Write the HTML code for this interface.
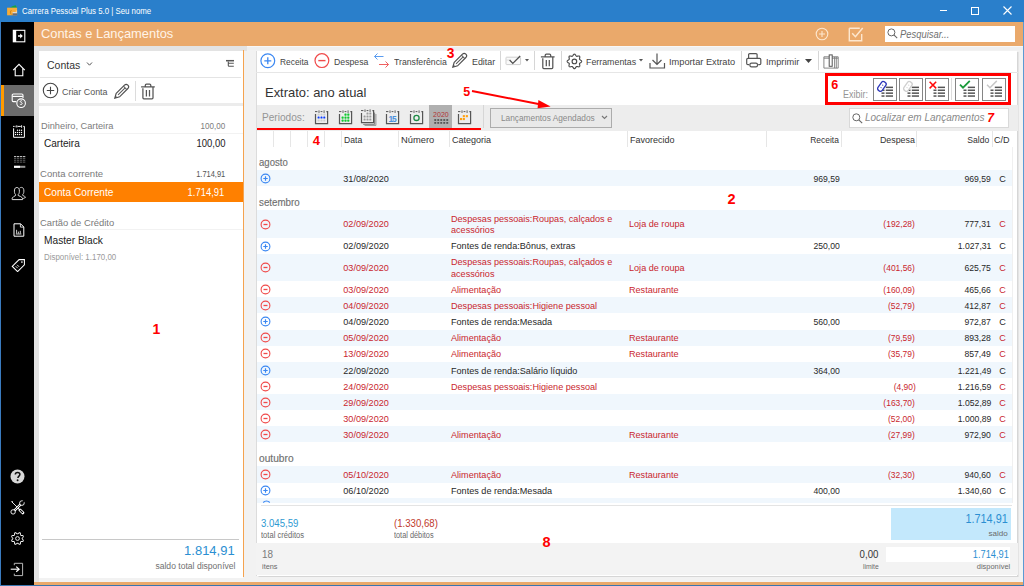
<!DOCTYPE html>
<html><head><meta charset="utf-8"><title>Carrera Pessoal Plus</title>
<style>
html,body{margin:0;padding:0;}
body{width:1024px;height:586px;overflow:hidden;position:relative;background:#f0f0f0;font-family:"Liberation Sans",sans-serif;}
body>div,body>svg{position:absolute;}
.t{white-space:nowrap;}
</style></head><body>
<div style="left:0px;top:0px;width:1024px;height:586px;background:#f2f2f2;"></div>
<div style="left:0px;top:0px;width:1024px;height:22px;background:#2a7fcb;"></div>
<div style="left:0px;top:22px;width:1px;height:564px;background:#3a7bbf;"></div>
<div style="left:1023px;top:22px;width:1px;height:564px;background:#5a9ad4;"></div>
<div style="left:0px;top:585px;width:1024px;height:1px;background:#3a76b0;"></div>
<svg style="left:6px;top:5px" width="12" height="12" viewBox="0 0 12 12"><path d="M3.6 2.8Q7.5 0.2 9.6 0.3L11 2.8z" fill="#12a640"/><rect x="1.1" y="2.7" width="10" height="7.6" fill="#f7ac38"/><path d="M5.4 5.2A2.1 2.5 0 0 0 5.4 9.4" fill="none" stroke="#c88416" stroke-width="1"/><rect x="6.6" y="7.1" width="4.5" height="1.2" fill="#d6dce6"/><rect x="6.6" y="8.4" width="4.5" height="1.9" fill="#5d6b80"/><rect x="9.8" y="5.6" width="1.3" height="1" fill="#fde0b0"/></svg>
<div class="t" style="top:5.85px;font-size:9.4px;line-height:9.4px;color:#ffffff;left:21.60px;transform-origin:0 0;transform:scaleX(0.8357);z-index:5;">Carrera Pessoal Plus 5.0 | Seu nome</div>
<div style="left:940px;top:10px;width:7px;height:1px;background:#ffffff;"></div>
<div style="left:971px;top:7px;width:6px;height:6px;border:1px solid #fff"></div>
<svg style="left:1003px;top:6px" width="9" height="9" viewBox="0 0 9 9"><path d="M0.5 0.5L8.5 8.5M8.5 0.5L0.5 8.5" stroke="#fff" stroke-width="1.1"/></svg>
<div style="left:1px;top:22px;width:33px;height:563px;background:#000000;"></div>
<div style="left:1px;top:85px;width:33px;height:31.2px;background:#6b6b6b;"></div>
<div style="left:1px;top:85px;width:3px;height:31.2px;background:#ff9a00;"></div>
<div style="left:34px;top:22px;width:989px;height:24px;background:#eaa96b;"></div>
<div class="t" style="top:27.87px;font-size:12.8px;line-height:12.8px;color:#fff4e8;left:40.60px;transform-origin:0 0;transform:scaleX(1.0052);z-index:5;">Contas e Lançamentos</div>
<div style="left:885px;top:25.7px;width:129.7px;height:16.4px;background:#ffffff;"></div>
<div class="t" style="top:29.84px;font-size:10px;line-height:10px;color:#707070;font-style:italic;left:899.50px;transform-origin:0 0;transform:scaleX(0.9402);z-index:5;">Pesquisar...</div>
<div style="left:34px;top:46px;width:213px;height:4.5px;background:#e3e3e3;"></div>
<div style="left:247px;top:46px;width:776px;height:4.2px;background:#efefef;"></div>
<div style="left:247px;top:46px;width:776px;height:1.3px;background:#f7f7f7;"></div>
<div style="left:34px;top:46px;width:4.6px;height:536px;background:#e4e4e4;"></div>
<div style="left:38.6px;top:50.5px;width:204.4px;height:527px;background:#ffffff;"></div>
<div style="left:242.5px;top:50.3px;width:1.6px;height:527px;background:#f5a34f;"></div>
<div style="left:34px;top:582px;width:989px;height:3px;background:#eaa96b;"></div>
<div style="left:256.8px;top:50.5px;width:760.6px;height:525px;background:#ffffff;box-shadow:1.5px 1px 0 #d6d6d6, -1px 0 0 #dcdcdc;"></div>
<svg style="left:12px;top:29px" width="14" height="14" viewBox="0 0 14 14"><rect x="1.3" y="1.3" width="11.5" height="11.5" fill="none" stroke="#fff" stroke-width="1.1"/><rect x="1" y="1" width="3.2" height="12" fill="#fff"/><path d="M6 6.2h2.2V4.4l2.6 2.6-2.6 2.6V7.8H6z" fill="#fff"/></svg>
<svg style="left:12px;top:63px" width="14" height="14" viewBox="0 0 14 14"><path d="M1.2 7.2L7 1.4l5.8 5.8M3.2 5.4v7.3h7.6V5.4" fill="none" stroke="#fff" stroke-width="1.1"/></svg>
<svg style="left:11px;top:93px" width="16" height="16" viewBox="0 0 16 16"><path d="M5.3 8.6H2.2a1 1 0 0 1-1-1V2.2a1.2 1.2 0 0 1 1.2-1.2h8.4a1.2 1.2 0 0 1 1.2 1.2V5" fill="none" stroke="#fff" stroke-width="1.1"/><path d="M1.4 3.4h10.4" stroke="#fff" stroke-width="1.2"/><circle cx="10.1" cy="10.2" r="4.3" fill="#6b6b6b" stroke="#fff" stroke-width="1.1"/><path d="M11.2 8.1c-.5-.5-1.7-.6-2 .2-.4 1 2.3 1.2 2 2.4-.3 1-1.6 1-2.3.4" fill="none" stroke="#fff" stroke-width="1"/></svg>
<svg style="left:12px;top:124px" width="14" height="15" viewBox="0 0 14 15"><path d="M1.6 4.3V13.3H12.4V2.4H11.3M1.1 2.4H2.6M5.8 2.4H8.8" fill="none" stroke="#fff" stroke-width="1"/><circle cx="4.6" cy="2.4" r="1.2" fill="#aaa"/><rect x="9" y="1.2" width="1.1" height="2.6" fill="#ccc"/><circle cx="5.5" cy="6.3" r="0.7" fill="#fff"/><circle cx="7.5" cy="6.3" r="0.7" fill="#fff"/><circle cx="9.5" cy="6.3" r="0.7" fill="#fff"/><circle cx="3.5" cy="8.4" r="0.7" fill="#fff"/><circle cx="5.5" cy="8.4" r="0.7" fill="#fff"/><circle cx="7.5" cy="8.4" r="0.7" fill="#fff"/><circle cx="9.5" cy="8.4" r="0.7" fill="#fff"/><circle cx="3.5" cy="10.5" r="0.7" fill="#fff"/><circle cx="5.5" cy="10.5" r="0.7" fill="#fff"/><circle cx="7.5" cy="10.5" r="0.7" fill="#fff"/><circle cx="9.5" cy="10.5" r="0.7" fill="#fff"/></svg>
<svg style="left:13px;top:155px" width="13" height="14" viewBox="0 0 13 14"><rect x="1" y="1" width="2.3" height="1.1" fill="#bbb"/><rect x="4" y="1" width="2.3" height="1.1" fill="#bbb"/><rect x="7" y="1" width="2.3" height="1.1" fill="#bbb"/><rect x="10" y="1" width="2.3" height="1.1" fill="#bbb"/><rect x="1" y="2.8" width="2.3" height="1.1" fill="#555"/><rect x="1" y="4.699999999999999" width="2.3" height="1.1" fill="#555"/><rect x="1" y="6.6" width="2.3" height="1.1" fill="#555"/><rect x="4" y="2.8" width="2.3" height="1.1" fill="#555"/><rect x="4" y="4.699999999999999" width="2.3" height="1.1" fill="#555"/><rect x="4" y="6.6" width="2.3" height="1.1" fill="#555"/><rect x="7" y="2.8" width="2.3" height="1.1" fill="#555"/><rect x="7" y="4.699999999999999" width="2.3" height="1.1" fill="#555"/><rect x="7" y="6.6" width="2.3" height="1.1" fill="#555"/><rect x="10" y="2.8" width="2.3" height="1.1" fill="#555"/><rect x="10" y="4.699999999999999" width="2.3" height="1.1" fill="#555"/><rect x="10" y="6.6" width="2.3" height="1.1" fill="#555"/><rect x="1" y="10.8" width="11.3" height="2" fill="#999"/><rect x="1" y="10.8" width="6" height="2" fill="#fff"/></svg>
<svg style="left:11px;top:186px" width="16" height="15" viewBox="0 0 16 15"><path d="M4.6 8.6C3.4 7.6 3.3 5.6 3.5 3.9 3.7 2.3 4.6 1.5 5.9 1.5S8.1 2.3 8.3 3.9C8.5 5.6 8.4 7.6 7.2 8.6V9.5C8.8 10.1 10.6 10.8 11.6 12.1V13.6H1.2V12.1C2.2 10.8 3.2 10.1 4.6 9.5Z" fill="none" stroke="#ddd" stroke-width="1"/><path d="M8.6 2.2C9 1.7 9.6 1.4 10.4 1.4 11.7 1.4 12.6 2.2 12.8 3.8 13 5.5 12.9 7.5 11.7 8.5V9.4C12.9 9.9 14 10.5 14.6 11.3L12.6 12.4H11.9" fill="none" stroke="#ccc" stroke-width="1"/></svg>
<svg style="left:13px;top:223px" width="12" height="14" viewBox="0 0 12 14"><path d="M1 .8h6.6l3.2 3.2v9.2H1z" fill="none" stroke="#fff" stroke-width="1"/><path d="M7.4 .8v3.3h3.3" fill="none" stroke="#fff" stroke-width="0.8"/><path d="M3.6 10.6V6.8M5.4 10.6V8.6M7.3 10.6V7.8M2.8 11h5.6" stroke="#fff" stroke-width="0.8"/></svg>
<svg style="left:11px;top:258px" width="15" height="14" viewBox="0 0 15 14"><path d="M1.3 8.4L8.1 1.6h5.3v5.3L6.6 13.6z" fill="none" stroke="#fff" stroke-width="1.05"/><circle cx="10.9" cy="4" r="0.85" fill="#fff"/><path d="M4.7 8.2l2 2M6.1 6.8l2 2" stroke="#fff" stroke-width="0.9"/></svg>
<svg style="left:10px;top:469px" width="15" height="15" viewBox="0 0 15 15"><circle cx="7.5" cy="7.5" r="7" fill="#d8d8d8"/><path d="M5.3 5.6c0-1.3 1-2.2 2.3-2.2s2.3.9 2.3 2.1c0 1.5-2 1.7-2 3.4" fill="none" stroke="#111" stroke-width="1.5"/><circle cx="7.6" cy="11.3" r="0.95" fill="#111"/></svg>
<svg style="left:10px;top:500px" width="15" height="15" viewBox="0 0 15 15"><g fill="none"><path d="M1.8 1.8L9 9" stroke="#fff" stroke-width="0.9"/><path d="M1.2 1.5l1-.5.8.8-.5 1z" fill="#fff"/><path d="M10 10L12.8 12.8" stroke="#fff" stroke-width="3" stroke-linecap="round"/><path d="M10.3 10.3L12.5 12.5" stroke="#000" stroke-width="1.1" stroke-linecap="round"/><path d="M3.4 11.6L11.6 3.4" stroke="#fff" stroke-width="2.4"/><path d="M3.4 11.6L11.6 3.4" stroke="#000" stroke-width="0.7"/><circle cx="3.1" cy="11.9" r="2.2" fill="#000" stroke="#fff" stroke-width="0.9"/><circle cx="11.9" cy="3.1" r="2.3" fill="#000" stroke="#fff" stroke-width="0.9"/><path d="M12.2 2.8l2.2-2.2" stroke="#000" stroke-width="1.6"/></g></svg>
<svg style="left:10px;top:531px" width="15" height="15" viewBox="0 0 15 15"><path d="M13.70 7.50L13.66 7.74L13.53 7.97L13.33 8.19L13.08 8.38L12.80 8.55L12.51 8.70L12.24 8.84L12.02 8.97L11.85 9.11L11.75 9.26L11.71 9.44L11.73 9.66L11.80 9.91L11.89 10.19L11.99 10.50L12.07 10.82L12.11 11.13L12.10 11.43L12.02 11.68L11.88 11.88L11.68 12.02L11.43 12.10L11.13 12.11L10.82 12.07L10.50 11.99L10.19 11.89L9.91 11.80L9.66 11.73L9.44 11.71L9.26 11.75L9.11 11.85L8.97 12.02L8.84 12.24L8.70 12.51L8.55 12.80L8.38 13.08L8.19 13.33L7.97 13.53L7.74 13.66L7.50 13.70L7.26 13.66L7.03 13.53L6.81 13.33L6.62 13.08L6.45 12.80L6.30 12.51L6.16 12.24L6.03 12.02L5.89 11.85L5.74 11.75L5.56 11.71L5.34 11.73L5.09 11.80L4.81 11.89L4.50 11.99L4.18 12.07L3.87 12.11L3.57 12.10L3.32 12.02L3.12 11.88L2.98 11.68L2.90 11.43L2.89 11.13L2.93 10.82L3.01 10.50L3.11 10.19L3.20 9.91L3.27 9.66L3.29 9.44L3.25 9.26L3.15 9.11L2.98 8.97L2.76 8.84L2.49 8.70L2.20 8.55L1.92 8.38L1.67 8.19L1.47 7.97L1.34 7.74L1.30 7.50L1.34 7.26L1.47 7.03L1.67 6.81L1.92 6.62L2.20 6.45L2.49 6.30L2.76 6.16L2.98 6.03L3.15 5.89L3.25 5.74L3.29 5.56L3.27 5.34L3.20 5.09L3.11 4.81L3.01 4.50L2.93 4.18L2.89 3.87L2.90 3.57L2.98 3.32L3.12 3.12L3.32 2.98L3.57 2.90L3.87 2.89L4.18 2.93L4.50 3.01L4.81 3.11L5.09 3.20L5.34 3.27L5.56 3.29L5.74 3.25L5.89 3.15L6.03 2.98L6.16 2.76L6.30 2.49L6.45 2.20L6.62 1.92L6.81 1.67L7.03 1.47L7.26 1.34L7.50 1.30L7.74 1.34L7.97 1.47L8.19 1.67L8.38 1.92L8.55 2.20L8.70 2.49L8.84 2.76L8.97 2.98L9.11 3.15L9.26 3.25L9.44 3.29L9.66 3.27L9.91 3.20L10.19 3.11L10.50 3.01L10.82 2.93L11.13 2.89L11.43 2.90L11.68 2.98L11.88 3.12L12.02 3.32L12.10 3.57L12.11 3.87L12.07 4.18L11.99 4.50L11.89 4.81L11.80 5.09L11.73 5.34L11.71 5.56L11.75 5.74L11.85 5.89L12.02 6.03L12.24 6.16L12.51 6.30L12.80 6.45L13.08 6.62L13.33 6.81L13.53 7.03L13.66 7.26L13.70 7.50z" fill="none" stroke="#fff" stroke-width="0.9" transform="rotate(22.5 7.5 7.5)"/><circle cx="7.5" cy="7.5" r="1.9" fill="none" stroke="#fff" stroke-width="0.9"/></svg>
<svg style="left:10px;top:562px" width="15" height="15" viewBox="0 0 15 15"><path d="M4.3 3.2V1.3h8.3v12.3H4.3v-1.9" fill="none" stroke="#b8b8b8" stroke-width="1" stroke-linejoin="round"/><path d="M0.7 7.2h7.5" stroke="#fff" stroke-width="1.1"/><path d="M6.2 4.6l2.9 2.6-2.9 2.6" fill="none" stroke="#fff" stroke-width="1.2"/></svg>
<svg style="left:815px;top:27px" width="14" height="14" viewBox="0 0 14 14"><circle cx="7" cy="7" r="5.8" fill="none" stroke="#fde7cf" stroke-width="1.1"/><path d="M7 4v6M4 7h6" stroke="#fde7cf" stroke-width="1.1"/></svg>
<svg style="left:848px;top:26px" width="17" height="16" viewBox="0 0 17 16"><path d="M1.3 2.3h10.5M1.3 2.3v12.4h12.4V8" fill="none" stroke="#fde7cf" stroke-width="1.4"/><path d="M4.2 7.3l3.2 3.4 7.3-8.8" fill="none" stroke="#fde7cf" stroke-width="1.5"/></svg>
<svg style="left:887px;top:28px" width="11" height="11" viewBox="0 0 11 11"><circle cx="4.4" cy="4.4" r="3.5" fill="none" stroke="#666" stroke-width="1"/><path d="M6.9 6.9l3.3 3.3" stroke="#666" stroke-width="1.1"/></svg>
<div class="t" style="top:59.87px;font-size:11.5px;line-height:11.5px;color:#333333;left:47.00px;transform-origin:0 0;transform:scaleX(0.9111);z-index:5;">Contas</div>
<svg style="left:86px;top:61px" width="7" height="6" viewBox="0 0 7 6"><path d="M1 1.5l2.5 2.7L6 1.5" fill="none" stroke="#555" stroke-width="1"/></svg>
<svg style="left:225px;top:59px" width="10" height="9" viewBox="0 0 10 9"><path d="M1 1.7H9" stroke="#555" stroke-width="1.5"/><path d="M3.3 2.4V6.5c0 .4.3.7.7.7H8.8M3.3 3.6c0 .4.3.7.7.7H8.8" fill="none" stroke="#555" stroke-width="1.1"/></svg>
<div style="left:40px;top:77px;width:201px;height:1px;background:#e4e4e4;"></div>
<svg style="left:42px;top:82px" width="17" height="17" viewBox="0 0 17 17"><circle cx="8.5" cy="8.5" r="7.2" fill="none" stroke="#444" stroke-width="1.1"/><path d="M8.5 4.8v7.4M4.8 8.5h7.4" stroke="#444" stroke-width="1.1"/></svg>
<div class="t" style="top:86.65px;font-size:9.4px;line-height:9.4px;color:#555555;left:62.10px;transform-origin:0 0;transform:scaleX(0.9492);z-index:5;">Criar Conta</div>
<svg style="left:113px;top:82.8px" width="17" height="17" viewBox="0 0 17 17"><g transform="rotate(-45 8.5 8.5)"><path d="M3.4 6.1H15.1a2.4 2.4 0 0 1 0 4.8H3.4L-1 8.5Z" fill="#fff" stroke="#4f4f4f" stroke-width="1.15"/><path d="M3.6 8.5H13.6M13.6 6.1V10.9" stroke="#5a5a5a" stroke-width="1.05"/><path d="M-1 8.5L1.3 7.4V9.6Z" fill="#4f4f4f"/></g></svg>
<div style="left:134.5px;top:81.4px;width:1px;height:19.3px;background:#dcdcdc;"></div>
<svg style="left:140px;top:82.5px" width="16" height="17" viewBox="0 0 16 17"><path d="M1.1 3.9H14.8M5.3 3.6V2.3a1.2 1.2 0 0 1 1.2-1.2h3.1a1.2 1.2 0 0 1 1.2 1.2v1.3M2.9 5.3V14.8a1 1 0 0 0 1 1H12a1 1 0 0 0 1-1V4.5M6.4 7v6.4M9.5 7v6.4" fill="none" stroke="#555" stroke-width="1.25"/></svg>
<div style="left:38.6px;top:103px;width:204.4px;height:3px;background:#ececec;"></div>
<div class="t" style="top:122.22px;font-size:8.6px;line-height:8.6px;color:#7c7c7c;left:40.60px;transform-origin:0 0;transform:scaleX(1.0748);z-index:5;">Dinheiro, Carteira</div>
<div class="t" style="top:122.22px;font-size:8.6px;line-height:8.6px;color:#7c7c7c;right:799.10px;transform-origin:100% 0;transform:scaleX(0.9393);z-index:5;">100,00</div>
<div style="left:38.6px;top:133px;width:204.4px;height:1px;background:#f2f2f2;"></div>
<div class="t" style="top:137.83px;font-size:10.6px;line-height:10.6px;color:#222222;left:43.70px;transform-origin:0 0;transform:scaleX(0.9499);z-index:5;">Carteira</div>
<div class="t" style="top:137.83px;font-size:10.6px;line-height:10.6px;color:#222222;right:799.10px;transform-origin:100% 0;transform:scaleX(0.8918);z-index:5;">100,00</div>
<div class="t" style="top:170.46px;font-size:8.8px;line-height:8.8px;color:#7a7a7a;left:40.30px;transform-origin:0 0;transform:scaleX(1.0841);z-index:5;">Conta corrente</div>
<div class="t" style="top:170.46px;font-size:8.8px;line-height:8.8px;color:#555555;right:798.90px;transform-origin:100% 0;transform:scaleX(0.8496);z-index:5;">1.714,91</div>
<div style="left:38.6px;top:182px;width:204.4px;height:20.2px;background:#ff8000;"></div>
<div class="t" style="top:186.73px;font-size:10.6px;line-height:10.6px;color:#ffffff;left:43.70px;transform-origin:0 0;transform:scaleX(0.9581);z-index:5;">Conta Corrente</div>
<div class="t" style="top:186.73px;font-size:10.6px;line-height:10.6px;color:#ffffff;right:799.80px;transform-origin:100% 0;transform:scaleX(0.8897);z-index:5;">1.714,91</div>
<div class="t" style="top:218.89px;font-size:9px;line-height:9px;color:#7a7a7a;left:40.30px;transform-origin:0 0;transform:scaleX(1.0444);z-index:5;">Cartão de Crédito</div>
<div style="left:38.6px;top:229.2px;width:204.4px;height:1px;background:#f2f2f2;"></div>
<div class="t" style="top:234.92px;font-size:10.5px;line-height:10.5px;color:#222222;left:43.70px;transform-origin:0 0;transform:scaleX(0.9705);z-index:5;">Master Black</div>
<div class="t" style="top:252.59px;font-size:8.4px;line-height:8.4px;color:#9a9a9a;left:43.70px;transform-origin:0 0;transform:scaleX(0.9455);z-index:5;">Disponível: 1.170,00</div>
<div class="t" style="top:322.46px;font-size:14px;line-height:14px;color:#ff0000;font-weight:bold;left:152.60px;transform-origin:0 0;z-index:5;">1</div>
<div style="left:41.8px;top:539px;width:197.1px;height:1px;background:#c8c8c8;"></div>
<div class="t" style="top:543.90px;font-size:13px;line-height:13px;color:#2b8fd2;right:789.80px;transform-origin:100% 0;transform:scaleX(0.9978);z-index:5;">1.814,91</div>
<div class="t" style="top:561.88px;font-size:8.3px;line-height:8.3px;color:#707070;right:789.00px;transform-origin:100% 0;transform:scaleX(1.0335);z-index:5;">saldo total disponível</div>
<svg style="left:260px;top:53px" width="16" height="16" viewBox="0 0 16 16"><circle cx="7.8" cy="7.8" r="6.9" fill="none" stroke="#3a87f2" stroke-width="1.2"/><path d="M7.8 4.3v7M4.3 7.8h7" stroke="#3a87f2" stroke-width="1.3"/></svg>
<div class="t" style="top:57.90px;font-size:9.1px;line-height:9.1px;color:#444444;left:279.60px;transform-origin:0 0;transform:scaleX(0.9208);z-index:5;">Receita</div>
<svg style="left:314px;top:52.5px" width="16" height="16" viewBox="0 0 16 16"><circle cx="7.9" cy="7.6" r="6.9" fill="none" stroke="#f04a4a" stroke-width="1.2"/><path d="M4.3 7.6h7.2" stroke="#f04a4a" stroke-width="1.4"/></svg>
<div class="t" style="top:57.90px;font-size:9.1px;line-height:9.1px;color:#444444;left:333.70px;transform-origin:0 0;transform:scaleX(0.9581);z-index:5;">Despesa</div>
<svg style="left:373px;top:52px" width="17" height="17" viewBox="0 0 17 17"><path d="M10.5 4.5H1.5M4.5 1.5l-3 3 3 3" fill="none" stroke="#5a9cf0" stroke-width="1"/><path d="M6 12.5h9.5M12.5 9.5l3 3-3 3" fill="none" stroke="#f06060" stroke-width="1"/></svg>
<div class="t" style="top:57.90px;font-size:9.1px;line-height:9.1px;color:#444444;left:393.70px;transform-origin:0 0;transform:scaleX(0.9554);z-index:5;">Transferência</div>
<div class="t" style="top:47.43px;font-size:13.8px;line-height:13.8px;color:#ff0000;font-weight:bold;left:446.80px;transform-origin:0 0;z-index:5;">3</div>
<svg style="left:451.3px;top:52.2px" width="17" height="17" viewBox="0 0 17 17"><g transform="rotate(-45 8.5 8.5)"><path d="M3.4 6.1H15.1a2.4 2.4 0 0 1 0 4.8H3.4L-1 8.5Z" fill="#fff" stroke="#4f4f4f" stroke-width="1.15"/><path d="M3.6 8.5H13.6M13.6 6.1V10.9" stroke="#5a5a5a" stroke-width="1.05"/><path d="M-1 8.5L1.3 7.4V9.6Z" fill="#4f4f4f"/></g></svg>
<div class="t" style="top:57.90px;font-size:9.1px;line-height:9.1px;color:#444444;left:471.70px;transform-origin:0 0;transform:scaleX(0.9762);z-index:5;">Editar</div>
<div style="left:500px;top:51px;width:1px;height:19px;background:#d6d6d6;"></div>
<svg style="left:505px;top:55px" width="17" height="11" viewBox="0 0 17 11"><rect x="1" y="2.2" width="14.6" height="7.4" rx="0.6" fill="#fafafa" stroke="#cfcfcf" stroke-width="1"/><path d="M1.4 5H4.6" stroke="#d8d8d8" stroke-width="0.9"/><path d="M4.6 5l3.2 3.4L15.2 1" fill="none" stroke="#505050" stroke-width="1.3"/></svg>
<svg style="left:525px;top:59px" width="4" height="3" viewBox="0 0 4 3"><path d="M0 0h4L2 2.5z" fill="#555"/></svg>
<div style="left:534.2px;top:51px;width:1px;height:19px;background:#d6d6d6;"></div>
<svg style="left:540px;top:52.5px" width="16" height="17" viewBox="0 0 16 17"><path d="M0.9 3.9H14.6M5.2 3.6V2.3a1.2 1.2 0 0 1 1.2-1.2h3.1a1.2 1.2 0 0 1 1.2 1.2v1.3M2.8 5.3V14.6a1 1 0 0 0 1 1H11.8a1 1 0 0 0 1-1V4.5M6.3 7v6.2M9.3 7v6.2" fill="none" stroke="#555" stroke-width="1.25"/></svg>
<div style="left:561.2px;top:51px;width:1px;height:19px;background:#d6d6d6;"></div>
<svg style="left:566px;top:52.5px" width="17" height="17" viewBox="0 0 17 17"><path d="M15.65 8.40L15.60 8.68L15.47 8.96L15.25 9.21L14.98 9.44L14.68 9.65L14.37 9.83L14.08 10.00L13.83 10.17L13.65 10.34L13.53 10.52L13.48 10.74L13.49 10.99L13.55 11.28L13.63 11.61L13.72 11.96L13.79 12.32L13.82 12.67L13.79 13.00L13.69 13.29L13.53 13.53L13.29 13.69L13.00 13.79L12.67 13.82L12.32 13.79L11.96 13.72L11.61 13.63L11.28 13.55L10.99 13.49L10.74 13.48L10.52 13.53L10.34 13.65L10.17 13.83L10.00 14.08L9.83 14.37L9.65 14.68L9.44 14.98L9.21 15.25L8.96 15.47L8.68 15.60L8.40 15.65L8.12 15.60L7.84 15.47L7.59 15.25L7.36 14.98L7.15 14.68L6.97 14.37L6.80 14.08L6.63 13.83L6.46 13.65L6.28 13.53L6.06 13.48L5.81 13.49L5.52 13.55L5.19 13.63L4.84 13.72L4.48 13.79L4.13 13.82L3.80 13.79L3.51 13.69L3.27 13.53L3.11 13.29L3.01 13.00L2.98 12.67L3.01 12.32L3.08 11.96L3.17 11.61L3.25 11.28L3.31 10.99L3.32 10.74L3.27 10.52L3.15 10.34L2.97 10.17L2.72 10.00L2.43 9.83L2.12 9.65L1.82 9.44L1.55 9.21L1.33 8.96L1.20 8.68L1.15 8.40L1.20 8.12L1.33 7.84L1.55 7.59L1.82 7.36L2.12 7.15L2.43 6.97L2.72 6.80L2.97 6.63L3.15 6.46L3.27 6.28L3.32 6.06L3.31 5.81L3.25 5.52L3.17 5.19L3.08 4.84L3.01 4.48L2.98 4.13L3.01 3.80L3.11 3.51L3.27 3.27L3.51 3.11L3.80 3.01L4.13 2.98L4.48 3.01L4.84 3.08L5.19 3.17L5.52 3.25L5.81 3.31L6.06 3.32L6.28 3.27L6.46 3.15L6.63 2.97L6.80 2.72L6.97 2.43L7.15 2.12L7.36 1.82L7.59 1.55L7.84 1.33L8.12 1.20L8.40 1.15L8.68 1.20L8.96 1.33L9.21 1.55L9.44 1.82L9.65 2.12L9.83 2.43L10.00 2.72L10.17 2.97L10.34 3.15L10.52 3.27L10.74 3.32L10.99 3.31L11.28 3.25L11.61 3.17L11.96 3.08L12.32 3.01L12.67 2.98L13.00 3.01L13.29 3.11L13.53 3.27L13.69 3.51L13.79 3.80L13.82 4.13L13.79 4.48L13.72 4.84L13.63 5.19L13.55 5.52L13.49 5.81L13.48 6.06L13.53 6.28L13.65 6.46L13.83 6.63L14.08 6.80L14.37 6.97L14.68 7.15L14.98 7.36L15.25 7.59L15.47 7.84L15.60 8.12L15.65 8.40z" fill="none" stroke="#4a4a4a" stroke-width="1.15"/><circle cx="8.4" cy="8.4" r="2.3" fill="none" stroke="#4a4a4a" stroke-width="1.15"/></svg>
<div class="t" style="top:57.90px;font-size:9.1px;line-height:9.1px;color:#444444;left:585.80px;transform-origin:0 0;transform:scaleX(0.9716);z-index:5;">Ferramentas</div>
<svg style="left:638.5px;top:59px" width="4" height="3" viewBox="0 0 4 3"><path d="M0 0h4L2 2.5z" fill="#555"/></svg>
<svg style="left:649px;top:53px" width="17" height="16" viewBox="0 0 17 16"><path d="M8 .5v11M3.5 7l4.5 4.5L12.5 7M1 10v5h14.5v-5" fill="none" stroke="#555" stroke-width="1.2"/></svg>
<div class="t" style="top:57.90px;font-size:9.1px;line-height:9.1px;color:#444444;left:669.00px;transform-origin:0 0;transform:scaleX(1.0153);z-index:5;">Importar Extrato</div>
<div style="left:740.6px;top:51px;width:1px;height:19px;background:#d6d6d6;"></div>
<svg style="left:746px;top:53.3px" width="16" height="15" viewBox="0 0 16 15"><path d="M2.6 5.4V1.8a1.1 1.1 0 0 1 1.1-1.1H10a1.1 1.1 0 0 1 1.1 1.1V5.4M3.3 11.6H1.9a1.2 1.2 0 0 1-1.2-1.2V6.6a1.2 1.2 0 0 1 1.2-1.2H13.6a1.2 1.2 0 0 1 1.2 1.2V10.4a1.2 1.2 0 0 1-1.2 1.2H12.2" fill="none" stroke="#555" stroke-width="1.2"/><rect x="3.9" y="10.2" width="7.6" height="3.6" rx="1.6" fill="#fff" stroke="#555" stroke-width="1.2"/></svg>
<div class="t" style="top:57.90px;font-size:9.1px;line-height:9.1px;color:#444444;left:765.60px;transform-origin:0 0;transform:scaleX(1.0139);z-index:5;">Imprimir</div>
<svg style="left:805px;top:58.5px" width="7" height="5" viewBox="0 0 7 5"><path d="M0 0h7L3.5 4z" fill="#444"/></svg>
<div style="left:818px;top:51px;width:1px;height:19px;background:#d6d6d6;"></div>
<svg style="left:822.5px;top:53.5px" width="16" height="15" viewBox="0 0 16 15"><path d="M0.9 2.8H15.2V14.1H0.9zM0.9 4.2H15.2M11.6 2.8V14.1M13.3 2.8V14.1" fill="none" stroke="#7a7a7a" stroke-width="0.9"/><rect x="6.2" y="0.9" width="3" height="11.4" fill="#fff" stroke="#555" stroke-width="1"/></svg>
<div style="left:256px;top:71.6px;width:762px;height:1.3px;background:#e6e6e6;"></div>
<div class="t" style="top:86.67px;font-size:12.8px;line-height:12.8px;color:#333333;left:265.00px;transform-origin:0 0;transform:scaleX(1.0108);z-index:5;">Extrato: ano atual</div>
<div class="t" style="top:85.72px;font-size:12.5px;line-height:12.5px;color:#ff0000;font-weight:bold;left:463.30px;transform-origin:0 0;z-index:5;">5</div>
<svg style="left:460px;top:85px;z-index:6" width="100" height="28" viewBox="460 85 100 28"><path d="M472 90.9L541 104.6" stroke="#ff0000" stroke-width="2"/><path d="M550.6 106.4L538.4 99.9 537.6 108.2z" fill="#ff0000"/></svg>
<div style="left:825px;top:73px;width:180px;height:26px;border:3px solid #ff0000;z-index:6"></div>
<div class="t" style="top:78.74px;font-size:12.6px;line-height:12.6px;color:#ff0000;font-weight:bold;left:831.30px;transform-origin:0 0;z-index:5;">6</div>
<div class="t" style="top:88.72px;font-size:10.5px;line-height:10.5px;color:#959595;left:843.00px;transform-origin:0 0;transform:scaleX(0.8565);z-index:5;">Exibir:</div>
<div style="left:256.8px;top:105px;width:761.2px;height:25.5px;background:#ededed;"></div>
<div class="t" style="top:112.39px;font-size:11px;line-height:11px;color:#959595;left:261.60px;transform-origin:0 0;transform:scaleX(0.9186);z-index:5;">Periodos:</div>
<svg style="left:313.9px;top:109.80000000000001px" width="18" height="17" viewBox="0 0 18 17"><path d="M1.5 4.1V13.7H13.6V1.6H12.4" fill="none" stroke="#555" stroke-width="1.2"/><path d="M1 1.6H3.4M6.6 1.6H8.4" stroke="#555" stroke-width="1"/><rect x="4.3" y="0.3" width="1.4" height="2.8" rx="0.5" fill="#8a8a8a"/><rect x="9.4" y="0.3" width="1.4" height="2.8" rx="0.5" fill="#8a8a8a"/><rect x="3.60" y="3.60" width="2.0" height="2.0" rx="0.60" fill="#cfcfcf"/><rect x="6.50" y="3.60" width="2.0" height="2.0" rx="0.60" fill="#cfcfcf"/><rect x="9.30" y="3.60" width="2.0" height="2.0" rx="0.60" fill="#cfcfcf"/><rect x="3.60" y="6.60" width="2.0" height="2.0" rx="0.60" fill="#0a3cff"/><rect x="6.50" y="6.60" width="2.0" height="2.0" rx="0.60" fill="#0a3cff"/><rect x="9.30" y="6.60" width="2.0" height="2.0" rx="0.60" fill="#0a3cff"/><rect x="3.60" y="9.60" width="2.0" height="2.0" rx="0.60" fill="#cfcfcf"/><rect x="6.50" y="9.60" width="2.0" height="2.0" rx="0.60" fill="#cfcfcf"/><rect x="9.30" y="9.60" width="2.0" height="2.0" rx="0.60" fill="#cfcfcf"/></svg>
<svg style="left:337.8px;top:109.80000000000001px" width="18" height="17" viewBox="0 0 18 17"><path d="M1.5 4.1V13.7H13.6V1.6H12.4" fill="none" stroke="#555" stroke-width="1.2"/><path d="M1 1.6H3.4M6.6 1.6H8.4" stroke="#555" stroke-width="1"/><rect x="4.3" y="0.3" width="1.4" height="2.8" rx="0.5" fill="#8a8a8a"/><rect x="9.4" y="0.3" width="1.4" height="2.8" rx="0.5" fill="#8a8a8a"/><rect x="6.40" y="3.50" width="2.2" height="2.2" rx="0.66" fill="#10c830"/><rect x="9.20" y="3.50" width="2.2" height="2.2" rx="0.66" fill="#10c830"/><rect x="3.50" y="6.50" width="2.2" height="2.2" rx="0.66" fill="#10c830"/><rect x="6.40" y="6.50" width="2.2" height="2.2" rx="0.66" fill="#10c830"/><rect x="9.20" y="6.50" width="2.2" height="2.2" rx="0.66" fill="#10c830"/><rect x="3.50" y="9.50" width="2.2" height="2.2" rx="0.66" fill="#10c830"/><rect x="6.40" y="9.50" width="2.2" height="2.2" rx="0.66" fill="#10c830"/><rect x="9.20" y="9.50" width="2.2" height="2.2" rx="0.66" fill="#10c830"/></svg>
<svg style="left:359.8px;top:109.4px" width="18" height="17" viewBox="0 0 18 17"><path d="M14.6 3.6V15.4H3.2" fill="none" stroke="#777" stroke-width="0.9"/><path d="M15.9 5V16.4H4.6" fill="none" stroke="#888" stroke-width="0.9"/><path d="M1.5 4.1V13.7H13.6V1.6H12.4" fill="none" stroke="#555" stroke-width="1.2"/><path d="M1 1.6H3.4M6.6 1.6H8.4" stroke="#555" stroke-width="1"/><rect x="4.3" y="0.3" width="1.4" height="2.8" rx="0.5" fill="#8a8a8a"/><rect x="9.4" y="0.3" width="1.4" height="2.8" rx="0.5" fill="#8a8a8a"/><rect x="6.50" y="3.60" width="2.0" height="2.0" rx="0.60" fill="#9a9a9a"/><rect x="9.30" y="3.60" width="2.0" height="2.0" rx="0.60" fill="#9a9a9a"/><rect x="3.60" y="6.60" width="2.0" height="2.0" rx="0.60" fill="#9a9a9a"/><rect x="6.50" y="6.60" width="2.0" height="2.0" rx="0.60" fill="#9a9a9a"/><rect x="9.30" y="6.60" width="2.0" height="2.0" rx="0.60" fill="#9a9a9a"/><rect x="3.60" y="9.60" width="2.0" height="2.0" rx="0.60" fill="#9a9a9a"/><rect x="6.50" y="9.60" width="2.0" height="2.0" rx="0.60" fill="#9a9a9a"/><rect x="9.30" y="9.60" width="2.0" height="2.0" rx="0.60" fill="#9a9a9a"/></svg>
<svg style="left:385.1px;top:109.80000000000001px" width="18" height="17" viewBox="0 0 18 17"><path d="M1.5 4.1V13.7H13.6V1.6H12.4" fill="none" stroke="#555" stroke-width="1.2"/><path d="M1 1.6H3.4M6.6 1.6H8.4" stroke="#555" stroke-width="1"/><rect x="4.3" y="0.3" width="1.4" height="2.8" rx="0.5" fill="#8a8a8a"/><rect x="9.4" y="0.3" width="1.4" height="2.8" rx="0.5" fill="#8a8a8a"/><text x="7.6" y="12.2" font-family="Liberation Sans" font-size="8.4" font-weight="bold" text-anchor="middle" fill="#4a90dc" textLength="8">15</text></svg>
<svg style="left:409.0px;top:109.80000000000001px" width="18" height="17" viewBox="0 0 18 17"><path d="M1.5 4.1V13.7H13.6V1.6H12.4" fill="none" stroke="#555" stroke-width="1.2"/><path d="M1 1.6H3.4M6.6 1.6H8.4" stroke="#555" stroke-width="1"/><rect x="4.3" y="0.3" width="1.4" height="2.8" rx="0.5" fill="#8a8a8a"/><rect x="9.4" y="0.3" width="1.4" height="2.8" rx="0.5" fill="#8a8a8a"/><circle cx="7.5" cy="7.9" r="2.6" fill="none" stroke="#1e8a45" stroke-width="1.3"/></svg>
<div style="left:428.7px;top:105.2px;width:22.9px;height:22.5px;background:#b0b0b0;"></div>
<svg style="left:428.7px;top:105.2px" width="23" height="22" viewBox="0 0 23 22"><text x="11.9" y="11.7" font-family="Liberation Sans" font-size="6.8" text-anchor="middle" fill="#b03636" textLength="15.6" lengthAdjust="spacingAndGlyphs">2020</text><rect x="5.30" y="14.10" width="1.9" height="1.8" fill="#555"/><rect x="5.30" y="17.00" width="1.9" height="1.8" fill="#555"/><rect x="8.30" y="14.10" width="1.9" height="1.8" fill="#555"/><rect x="8.30" y="17.00" width="1.9" height="1.8" fill="#555"/><rect x="11.30" y="14.10" width="1.9" height="1.8" fill="#555"/><rect x="11.30" y="17.00" width="1.9" height="1.8" fill="#555"/><rect x="14.30" y="14.10" width="1.9" height="1.8" fill="#555"/><rect x="14.30" y="17.00" width="1.9" height="1.8" fill="#555"/><rect x="17.30" y="14.10" width="1.9" height="1.8" fill="#555"/><rect x="17.30" y="17.00" width="1.9" height="1.8" fill="#555"/></svg>
<svg style="left:456.5px;top:109.7px" width="18" height="17" viewBox="0 0 18 17"><path d="M1.5 4.1V13.7H13.6V1.6H12.4" fill="none" stroke="#555" stroke-width="1.2"/><path d="M1 1.6H3.4M6.6 1.6H8.4" stroke="#555" stroke-width="1"/><rect x="4.3" y="0.3" width="1.4" height="2.8" rx="0.5" fill="#8a8a8a"/><rect x="9.4" y="0.3" width="1.4" height="2.8" rx="0.5" fill="#8a8a8a"/><rect x="3" y="8" width="2.1" height="2.1" fill="#ffa010"/><rect x="5.8" y="8" width="2.1" height="2.1" fill="#ffa010"/><rect x="5.8" y="5.1" width="2.1" height="2.1" fill="#ffa010"/><rect x="8.8" y="5.1" width="2.1" height="2.1" fill="#ffa010"/></svg>
<div style="left:257.2px;top:128px;width:224px;height:2.4px;background:#ff0000;z-index:4;"></div>
<div style="left:482.5px;top:105px;width:1px;height:23px;background:#d6d6d6;"></div>
<div style="left:489.5px;top:108.1px;width:120.2px;height:17.6px;border:1px solid #acacac;background:#e9e9e9;box-sizing:content-box"></div>
<div class="t" style="top:112.96px;font-size:9.5px;line-height:9.5px;color:#8a8a8a;left:500.50px;transform-origin:0 0;transform:scaleX(0.8738);z-index:5;">Lançamentos Agendados</div>
<svg style="left:601px;top:115px" width="7" height="5" viewBox="0 0 7 5"><path d="M1 1l2.5 2.5L6 1" fill="none" stroke="#777" stroke-width="1.1"/></svg>
<div style="left:849.2px;top:108.2px;width:158.3px;height:17.4px;border:1px solid #d9d9d9;background:#fff"></div>
<svg style="left:851.5px;top:112.8px" width="11" height="11" viewBox="0 0 11 11"><circle cx="4.3" cy="4.3" r="3.5" fill="none" stroke="#666" stroke-width="1"/><path d="M6.8 6.8l3.4 3.4" stroke="#666" stroke-width="1.1"/></svg>
<div class="t" style="top:112.29px;font-size:11px;line-height:11px;color:#8a8a8a;font-style:italic;left:865.00px;transform-origin:0 0;transform:scaleX(0.9090);z-index:5;">Localizar em Lançamentos</div>
<div class="t" style="top:111.78px;font-size:12.2px;line-height:12.2px;color:#ff0000;font-weight:bold;font-style:italic;left:987.30px;transform-origin:0 0;z-index:5;">7</div>
<div style="left:273.3px;top:131px;width:1px;height:16px;background:#e6e6e6;"></div>
<div style="left:290.2px;top:131px;width:1px;height:16px;background:#e6e6e6;"></div>
<div style="left:307.1px;top:131px;width:1px;height:16px;background:#e6e6e6;"></div>
<div style="left:324.3px;top:131px;width:1px;height:16px;background:#e6e6e6;"></div>
<div style="left:341.0px;top:131px;width:1px;height:16px;background:#e6e6e6;"></div>
<div style="left:397.9px;top:131px;width:1px;height:16px;background:#e6e6e6;"></div>
<div style="left:449.0px;top:131px;width:1px;height:16px;background:#e6e6e6;"></div>
<div style="left:627.0px;top:131px;width:1px;height:16px;background:#e6e6e6;"></div>
<div style="left:766.1px;top:131px;width:1px;height:16px;background:#e6e6e6;"></div>
<div style="left:841.2px;top:131px;width:1px;height:16px;background:#e6e6e6;"></div>
<div style="left:916.2px;top:131px;width:1px;height:16px;background:#e6e6e6;"></div>
<div style="left:991.7px;top:131px;width:1px;height:16px;background:#e6e6e6;"></div>
<div class="t" style="top:134.00px;font-size:13px;line-height:13px;color:#ff0000;font-weight:bold;left:312.80px;transform-origin:0 0;z-index:5;">4</div>
<div class="t" style="top:135.70px;font-size:9.1px;line-height:9.1px;color:#333333;left:344.00px;transform-origin:0 0;transform:scaleX(0.9470);z-index:5;">Data</div>
<div class="t" style="top:135.70px;font-size:9.1px;line-height:9.1px;color:#333333;left:400.70px;transform-origin:0 0;transform:scaleX(1.0265);z-index:5;">Número</div>
<div class="t" style="top:135.70px;font-size:9.1px;line-height:9.1px;color:#333333;left:452.00px;transform-origin:0 0;transform:scaleX(0.9889);z-index:5;">Categoria</div>
<div class="t" style="top:135.70px;font-size:9.1px;line-height:9.1px;color:#333333;left:629.70px;transform-origin:0 0;transform:scaleX(0.9889);z-index:5;">Favorecido</div>
<div class="t" style="top:135.70px;font-size:9.1px;line-height:9.1px;color:#333333;right:184.90px;transform-origin:100% 0;transform:scaleX(0.9273);z-index:5;">Receita</div>
<div class="t" style="top:135.70px;font-size:9.1px;line-height:9.1px;color:#333333;right:109.40px;transform-origin:100% 0;transform:scaleX(0.9748);z-index:5;">Despesa</div>
<div class="t" style="top:135.70px;font-size:9.1px;line-height:9.1px;color:#333333;right:34.30px;transform-origin:100% 0;transform:scaleX(0.9456);z-index:5;">Saldo</div>
<div class="t" style="top:135.70px;font-size:9.1px;line-height:9.1px;color:#333333;left:994.40px;transform-origin:0 0;transform:scaleX(0.9954);z-index:5;">C/D</div>
<div style="left:873.2px;top:78.2px;width:21.8px;height:20.5px;border:1px solid #858585;background:#fff;z-index:7"></div>
<svg style="left:873.2px;top:78px;z-index:8" width="24" height="23" viewBox="0 0 24 23"><rect x="12.8" y="8.599999999999994" width="7.2" height="1.5" fill="#555"/><rect x="8.5" y="11.5" width="3" height="1.5" fill="#555"/><rect x="12.8" y="11.5" width="7.2" height="1.5" fill="#555"/><rect x="8.5" y="14.400000000000006" width="3" height="1.5" fill="#555"/><rect x="12.8" y="14.400000000000006" width="7.2" height="1.5" fill="#555"/><rect x="8.5" y="17.299999999999997" width="3" height="1.5" fill="#555"/><rect x="12.8" y="17.299999999999997" width="7.2" height="1.5" fill="#555"/><g transform="rotate(-55 8.9 8.4)"><rect x="3.7" y="5.8" width="10.4" height="5.2" rx="2.1" fill="#fff" stroke="#2b35b8" stroke-width="1.3"/><circle cx="7.4" cy="8.4" r="0.6" fill="#2b35b8"/><circle cx="10.4" cy="8.4" r="0.6" fill="#2b35b8"/></g></svg>
<div style="left:899.1px;top:78.2px;width:21.8px;height:20.5px;border:1px solid #858585;background:#fff;z-index:7"></div>
<svg style="left:899.1px;top:78px;z-index:8" width="24" height="23" viewBox="0 0 24 23"><rect x="12.8" y="8.599999999999994" width="7.2" height="1.5" fill="#555"/><rect x="8.5" y="11.5" width="3" height="1.5" fill="#555"/><rect x="12.8" y="11.5" width="7.2" height="1.5" fill="#555"/><rect x="8.5" y="14.400000000000006" width="3" height="1.5" fill="#555"/><rect x="12.8" y="14.400000000000006" width="7.2" height="1.5" fill="#555"/><rect x="8.5" y="17.299999999999997" width="3" height="1.5" fill="#555"/><rect x="12.8" y="17.299999999999997" width="7.2" height="1.5" fill="#555"/><g transform="rotate(-55 8.9 8.4)"><rect x="3.7" y="5.8" width="10.4" height="5.2" rx="2.1" fill="#fff" stroke="#cfcfcf" stroke-width="1.3"/><circle cx="7.4" cy="8.4" r="0.6" fill="#cfcfcf"/><circle cx="10.4" cy="8.4" r="0.6" fill="#cfcfcf"/></g></svg>
<div style="left:925.2px;top:78.2px;width:21.8px;height:20.5px;border:1px solid #858585;background:#fff;z-index:7"></div>
<svg style="left:925.2px;top:78px;z-index:8" width="24" height="23" viewBox="0 0 24 23"><rect x="12.8" y="8.599999999999994" width="7.2" height="1.5" fill="#555"/><rect x="8.5" y="11.5" width="3" height="1.5" fill="#555"/><rect x="12.8" y="11.5" width="7.2" height="1.5" fill="#555"/><rect x="8.5" y="14.400000000000006" width="3" height="1.5" fill="#555"/><rect x="12.8" y="14.400000000000006" width="7.2" height="1.5" fill="#555"/><rect x="8.5" y="17.299999999999997" width="3" height="1.5" fill="#555"/><rect x="12.8" y="17.299999999999997" width="7.2" height="1.5" fill="#555"/><path d="M4.6 3.8l6.6 6.6M11.2 3.8l-6.6 6.6" stroke="#ff0a0a" stroke-width="1.5"/></svg>
<div style="left:951.2px;top:78px;width:1px;height:22px;background:#dddddd;z-index:7;"></div>
<div style="left:955px;top:78.2px;width:21.8px;height:20.5px;border:1px solid #858585;background:#fff;z-index:7"></div>
<svg style="left:955px;top:78px;z-index:8" width="24" height="23" viewBox="0 0 24 23"><rect x="12.8" y="8.599999999999994" width="7.2" height="1.5" fill="#555"/><rect x="8.5" y="11.5" width="3" height="1.5" fill="#555"/><rect x="12.8" y="11.5" width="7.2" height="1.5" fill="#555"/><rect x="8.5" y="14.400000000000006" width="3" height="1.5" fill="#555"/><rect x="12.8" y="14.400000000000006" width="7.2" height="1.5" fill="#555"/><rect x="8.5" y="17.299999999999997" width="3" height="1.5" fill="#555"/><rect x="12.8" y="17.299999999999997" width="7.2" height="1.5" fill="#555"/><path d="M5 6.7l3 3L14.8 2.9" fill="none" stroke="#1a9a3a" stroke-width="1.8"/></svg>
<div style="left:982px;top:78.2px;width:21.8px;height:20.5px;border:1px solid #858585;background:#fff;z-index:7"></div>
<svg style="left:982px;top:78px;z-index:8" width="24" height="23" viewBox="0 0 24 23"><rect x="12.8" y="8.599999999999994" width="7.2" height="1.5" fill="#555"/><rect x="8.5" y="11.5" width="3" height="1.5" fill="#555"/><rect x="12.8" y="11.5" width="7.2" height="1.5" fill="#555"/><rect x="8.5" y="14.400000000000006" width="3" height="1.5" fill="#555"/><rect x="12.8" y="14.400000000000006" width="7.2" height="1.5" fill="#555"/><rect x="8.5" y="17.299999999999997" width="3" height="1.5" fill="#555"/><rect x="12.8" y="17.299999999999997" width="7.2" height="1.5" fill="#555"/><path d="M5 6.7l3 3L14.8 2.9" fill="none" stroke="#c8c8c8" stroke-width="1.5"/></svg>
<div class="t" style="top:158.17px;font-size:10.2px;line-height:10.2px;color:#6f6f6f;left:258.90px;transform-origin:0 0;transform:scaleX(0.9381);z-index:5;-webkit-text-stroke:0.15px #6f6f6f;">agosto</div>
<div style="left:257px;top:170.2px;width:755.4px;height:16.1px;background:#f0f7fd;"></div>
<svg style="left:260.4px;top:172.75px;z-index:3" width="11" height="11" viewBox="0 0 11 11"><circle cx="5.5" cy="5.5" r="4.4" fill="none" stroke="#3a87f2" stroke-width="1.1"/><path d="M5.5 3.3v4.4M3.3 5.5h4.4" stroke="#3a87f2" stroke-width="1.2"/></svg>
<div class="t" style="top:174.65px;font-size:9.1px;line-height:9.1px;color:#282828;left:343.30px;transform-origin:0 0;transform:scaleX(1.0000);z-index:5;">31/08/2020</div>
<div class="t" style="top:174.65px;font-size:9.1px;line-height:9.1px;color:#282828;right:184.00px;transform-origin:100% 0;transform:scaleX(0.9500);z-index:5;">969,59</div>
<div class="t" style="top:174.65px;font-size:9.1px;line-height:9.1px;color:#282828;right:33.10px;transform-origin:100% 0;transform:scaleX(0.9500);z-index:5;">969,59</div>
<div class="t" style="top:174.65px;font-size:9.1px;line-height:9.1px;color:#282828;left:999.20px;transform-origin:0 0;transform:scaleX(1.0000);z-index:5;">C</div>
<div class="t" style="top:197.97px;font-size:10.2px;line-height:10.2px;color:#6f6f6f;left:258.90px;transform-origin:0 0;transform:scaleX(0.9584);z-index:5;-webkit-text-stroke:0.15px #6f6f6f;">setembro</div>
<div style="left:257px;top:210px;width:755.4px;height:28px;background:#f0f7fd;"></div>
<svg style="left:260.4px;top:218.50px;z-index:3" width="11" height="11" viewBox="0 0 11 11"><circle cx="5.5" cy="5.5" r="4.4" fill="none" stroke="#f04a4a" stroke-width="1.1"/><path d="M3.5 5.5h4" stroke="#f04a4a" stroke-width="1.3"/></svg>
<div class="t" style="top:220.40px;font-size:9.1px;line-height:9.1px;color:#c9262e;left:343.30px;transform-origin:0 0;transform:scaleX(1.0000);z-index:5;">02/09/2020</div>
<div class="t" style="top:214.90px;font-size:9.1px;line-height:9.1px;color:#c9262e;left:451.00px;transform-origin:0 0;transform:scaleX(1.0000);z-index:5;">Despesas pessoais:Roupas, calçados e</div>
<div class="t" style="top:226.20px;font-size:9.1px;line-height:9.1px;color:#c9262e;left:451.00px;transform-origin:0 0;transform:scaleX(1.0000);z-index:5;">acessórios</div>
<div class="t" style="top:220.40px;font-size:9.1px;line-height:9.1px;color:#c9262e;left:629.00px;transform-origin:0 0;transform:scaleX(1.0000);z-index:5;">Loja de roupa</div>
<div class="t" style="top:220.40px;font-size:9.1px;line-height:9.1px;color:#c9262e;right:108.70px;transform-origin:100% 0;transform:scaleX(0.9300);z-index:5;">(192,28)</div>
<div class="t" style="top:220.40px;font-size:9.1px;line-height:9.1px;color:#282828;right:33.10px;transform-origin:100% 0;transform:scaleX(0.9500);z-index:5;">777,31</div>
<div class="t" style="top:220.40px;font-size:9.1px;line-height:9.1px;color:#c9262e;left:999.20px;transform-origin:0 0;transform:scaleX(1.0000);z-index:5;">C</div>
<svg style="left:260.4px;top:240.50px;z-index:3" width="11" height="11" viewBox="0 0 11 11"><circle cx="5.5" cy="5.5" r="4.4" fill="none" stroke="#3a87f2" stroke-width="1.1"/><path d="M5.5 3.3v4.4M3.3 5.5h4.4" stroke="#3a87f2" stroke-width="1.2"/></svg>
<div class="t" style="top:242.40px;font-size:9.1px;line-height:9.1px;color:#282828;left:343.30px;transform-origin:0 0;transform:scaleX(1.0000);z-index:5;">02/09/2020</div>
<div class="t" style="top:242.40px;font-size:9.1px;line-height:9.1px;color:#282828;left:451.00px;transform-origin:0 0;transform:scaleX(1.0000);z-index:5;">Fontes de renda:Bônus, extras</div>
<div class="t" style="top:242.40px;font-size:9.1px;line-height:9.1px;color:#282828;right:184.00px;transform-origin:100% 0;transform:scaleX(0.9500);z-index:5;">250,00</div>
<div class="t" style="top:242.40px;font-size:9.1px;line-height:9.1px;color:#282828;right:33.10px;transform-origin:100% 0;transform:scaleX(0.9500);z-index:5;">1.027,31</div>
<div class="t" style="top:242.40px;font-size:9.1px;line-height:9.1px;color:#282828;left:999.20px;transform-origin:0 0;transform:scaleX(1.0000);z-index:5;">C</div>
<div style="left:257px;top:254px;width:755.4px;height:27px;background:#f0f7fd;"></div>
<svg style="left:260.4px;top:262.00px;z-index:3" width="11" height="11" viewBox="0 0 11 11"><circle cx="5.5" cy="5.5" r="4.4" fill="none" stroke="#f04a4a" stroke-width="1.1"/><path d="M3.5 5.5h4" stroke="#f04a4a" stroke-width="1.3"/></svg>
<div class="t" style="top:263.90px;font-size:9.1px;line-height:9.1px;color:#c9262e;left:343.30px;transform-origin:0 0;transform:scaleX(1.0000);z-index:5;">03/09/2020</div>
<div class="t" style="top:258.40px;font-size:9.1px;line-height:9.1px;color:#c9262e;left:451.00px;transform-origin:0 0;transform:scaleX(1.0000);z-index:5;">Despesas pessoais:Roupas, calçados e</div>
<div class="t" style="top:269.70px;font-size:9.1px;line-height:9.1px;color:#c9262e;left:451.00px;transform-origin:0 0;transform:scaleX(1.0000);z-index:5;">acessórios</div>
<div class="t" style="top:263.90px;font-size:9.1px;line-height:9.1px;color:#c9262e;left:629.00px;transform-origin:0 0;transform:scaleX(1.0000);z-index:5;">Loja de roupa</div>
<div class="t" style="top:263.90px;font-size:9.1px;line-height:9.1px;color:#c9262e;right:108.70px;transform-origin:100% 0;transform:scaleX(0.9300);z-index:5;">(401,56)</div>
<div class="t" style="top:263.90px;font-size:9.1px;line-height:9.1px;color:#282828;right:33.10px;transform-origin:100% 0;transform:scaleX(0.9500);z-index:5;">625,75</div>
<div class="t" style="top:263.90px;font-size:9.1px;line-height:9.1px;color:#c9262e;left:999.20px;transform-origin:0 0;transform:scaleX(1.0000);z-index:5;">C</div>
<svg style="left:260.4px;top:283.60px;z-index:3" width="11" height="11" viewBox="0 0 11 11"><circle cx="5.5" cy="5.5" r="4.4" fill="none" stroke="#f04a4a" stroke-width="1.1"/><path d="M3.5 5.5h4" stroke="#f04a4a" stroke-width="1.3"/></svg>
<div class="t" style="top:285.50px;font-size:9.1px;line-height:9.1px;color:#c9262e;left:343.30px;transform-origin:0 0;transform:scaleX(1.0000);z-index:5;">03/09/2020</div>
<div class="t" style="top:285.50px;font-size:9.1px;line-height:9.1px;color:#c9262e;left:451.00px;transform-origin:0 0;transform:scaleX(1.0000);z-index:5;">Alimentação</div>
<div class="t" style="top:285.50px;font-size:9.1px;line-height:9.1px;color:#c9262e;left:629.00px;transform-origin:0 0;transform:scaleX(1.0000);z-index:5;">Restaurante</div>
<div class="t" style="top:285.50px;font-size:9.1px;line-height:9.1px;color:#c9262e;right:108.70px;transform-origin:100% 0;transform:scaleX(0.9300);z-index:5;">(160,09)</div>
<div class="t" style="top:285.50px;font-size:9.1px;line-height:9.1px;color:#282828;right:33.10px;transform-origin:100% 0;transform:scaleX(0.9500);z-index:5;">465,66</div>
<div class="t" style="top:285.50px;font-size:9.1px;line-height:9.1px;color:#c9262e;left:999.20px;transform-origin:0 0;transform:scaleX(1.0000);z-index:5;">C</div>
<div style="left:257px;top:297.2px;width:755.4px;height:16.2px;background:#f0f7fd;"></div>
<svg style="left:260.4px;top:299.80px;z-index:3" width="11" height="11" viewBox="0 0 11 11"><circle cx="5.5" cy="5.5" r="4.4" fill="none" stroke="#f04a4a" stroke-width="1.1"/><path d="M3.5 5.5h4" stroke="#f04a4a" stroke-width="1.3"/></svg>
<div class="t" style="top:301.70px;font-size:9.1px;line-height:9.1px;color:#c9262e;left:343.30px;transform-origin:0 0;transform:scaleX(1.0000);z-index:5;">04/09/2020</div>
<div class="t" style="top:301.70px;font-size:9.1px;line-height:9.1px;color:#c9262e;left:451.00px;transform-origin:0 0;transform:scaleX(1.0000);z-index:5;">Despesas pessoais:Higiene pessoal</div>
<div class="t" style="top:301.70px;font-size:9.1px;line-height:9.1px;color:#c9262e;right:108.70px;transform-origin:100% 0;transform:scaleX(0.9300);z-index:5;">(52,79)</div>
<div class="t" style="top:301.70px;font-size:9.1px;line-height:9.1px;color:#282828;right:33.10px;transform-origin:100% 0;transform:scaleX(0.9500);z-index:5;">412,87</div>
<div class="t" style="top:301.70px;font-size:9.1px;line-height:9.1px;color:#c9262e;left:999.20px;transform-origin:0 0;transform:scaleX(1.0000);z-index:5;">C</div>
<svg style="left:260.4px;top:316.00px;z-index:3" width="11" height="11" viewBox="0 0 11 11"><circle cx="5.5" cy="5.5" r="4.4" fill="none" stroke="#3a87f2" stroke-width="1.1"/><path d="M5.5 3.3v4.4M3.3 5.5h4.4" stroke="#3a87f2" stroke-width="1.2"/></svg>
<div class="t" style="top:317.90px;font-size:9.1px;line-height:9.1px;color:#282828;left:343.30px;transform-origin:0 0;transform:scaleX(1.0000);z-index:5;">04/09/2020</div>
<div class="t" style="top:317.90px;font-size:9.1px;line-height:9.1px;color:#282828;left:451.00px;transform-origin:0 0;transform:scaleX(1.0000);z-index:5;">Fontes de renda:Mesada</div>
<div class="t" style="top:317.90px;font-size:9.1px;line-height:9.1px;color:#282828;right:184.00px;transform-origin:100% 0;transform:scaleX(0.9500);z-index:5;">560,00</div>
<div class="t" style="top:317.90px;font-size:9.1px;line-height:9.1px;color:#282828;right:33.10px;transform-origin:100% 0;transform:scaleX(0.9500);z-index:5;">972,87</div>
<div class="t" style="top:317.90px;font-size:9.1px;line-height:9.1px;color:#282828;left:999.20px;transform-origin:0 0;transform:scaleX(1.0000);z-index:5;">C</div>
<div style="left:257px;top:329.6px;width:755.4px;height:16.2px;background:#f0f7fd;"></div>
<svg style="left:260.4px;top:332.20px;z-index:3" width="11" height="11" viewBox="0 0 11 11"><circle cx="5.5" cy="5.5" r="4.4" fill="none" stroke="#f04a4a" stroke-width="1.1"/><path d="M3.5 5.5h4" stroke="#f04a4a" stroke-width="1.3"/></svg>
<div class="t" style="top:334.10px;font-size:9.1px;line-height:9.1px;color:#c9262e;left:343.30px;transform-origin:0 0;transform:scaleX(1.0000);z-index:5;">05/09/2020</div>
<div class="t" style="top:334.10px;font-size:9.1px;line-height:9.1px;color:#c9262e;left:451.00px;transform-origin:0 0;transform:scaleX(1.0000);z-index:5;">Alimentação</div>
<div class="t" style="top:334.10px;font-size:9.1px;line-height:9.1px;color:#c9262e;left:629.00px;transform-origin:0 0;transform:scaleX(1.0000);z-index:5;">Restaurante</div>
<div class="t" style="top:334.10px;font-size:9.1px;line-height:9.1px;color:#c9262e;right:108.70px;transform-origin:100% 0;transform:scaleX(0.9300);z-index:5;">(79,59)</div>
<div class="t" style="top:334.10px;font-size:9.1px;line-height:9.1px;color:#282828;right:33.10px;transform-origin:100% 0;transform:scaleX(0.9500);z-index:5;">893,28</div>
<div class="t" style="top:334.10px;font-size:9.1px;line-height:9.1px;color:#c9262e;left:999.20px;transform-origin:0 0;transform:scaleX(1.0000);z-index:5;">C</div>
<svg style="left:260.4px;top:348.40px;z-index:3" width="11" height="11" viewBox="0 0 11 11"><circle cx="5.5" cy="5.5" r="4.4" fill="none" stroke="#f04a4a" stroke-width="1.1"/><path d="M3.5 5.5h4" stroke="#f04a4a" stroke-width="1.3"/></svg>
<div class="t" style="top:350.30px;font-size:9.1px;line-height:9.1px;color:#c9262e;left:343.30px;transform-origin:0 0;transform:scaleX(1.0000);z-index:5;">13/09/2020</div>
<div class="t" style="top:350.30px;font-size:9.1px;line-height:9.1px;color:#c9262e;left:451.00px;transform-origin:0 0;transform:scaleX(1.0000);z-index:5;">Alimentação</div>
<div class="t" style="top:350.30px;font-size:9.1px;line-height:9.1px;color:#c9262e;left:629.00px;transform-origin:0 0;transform:scaleX(1.0000);z-index:5;">Restaurante</div>
<div class="t" style="top:350.30px;font-size:9.1px;line-height:9.1px;color:#c9262e;right:108.70px;transform-origin:100% 0;transform:scaleX(0.9300);z-index:5;">(35,79)</div>
<div class="t" style="top:350.30px;font-size:9.1px;line-height:9.1px;color:#282828;right:33.10px;transform-origin:100% 0;transform:scaleX(0.9500);z-index:5;">857,49</div>
<div class="t" style="top:350.30px;font-size:9.1px;line-height:9.1px;color:#c9262e;left:999.20px;transform-origin:0 0;transform:scaleX(1.0000);z-index:5;">C</div>
<div style="left:257px;top:362.0px;width:755.4px;height:16.3px;background:#f0f7fd;"></div>
<svg style="left:260.4px;top:364.65px;z-index:3" width="11" height="11" viewBox="0 0 11 11"><circle cx="5.5" cy="5.5" r="4.4" fill="none" stroke="#3a87f2" stroke-width="1.1"/><path d="M5.5 3.3v4.4M3.3 5.5h4.4" stroke="#3a87f2" stroke-width="1.2"/></svg>
<div class="t" style="top:366.55px;font-size:9.1px;line-height:9.1px;color:#282828;left:343.30px;transform-origin:0 0;transform:scaleX(1.0000);z-index:5;">22/09/2020</div>
<div class="t" style="top:366.55px;font-size:9.1px;line-height:9.1px;color:#282828;left:451.00px;transform-origin:0 0;transform:scaleX(1.0000);z-index:5;">Fontes de renda:Salário líquido</div>
<div class="t" style="top:366.55px;font-size:9.1px;line-height:9.1px;color:#282828;right:184.00px;transform-origin:100% 0;transform:scaleX(0.9500);z-index:5;">364,00</div>
<div class="t" style="top:366.55px;font-size:9.1px;line-height:9.1px;color:#282828;right:33.10px;transform-origin:100% 0;transform:scaleX(0.9500);z-index:5;">1.221,49</div>
<div class="t" style="top:366.55px;font-size:9.1px;line-height:9.1px;color:#282828;left:999.20px;transform-origin:0 0;transform:scaleX(1.0000);z-index:5;">C</div>
<svg style="left:260.4px;top:380.80px;z-index:3" width="11" height="11" viewBox="0 0 11 11"><circle cx="5.5" cy="5.5" r="4.4" fill="none" stroke="#f04a4a" stroke-width="1.1"/><path d="M3.5 5.5h4" stroke="#f04a4a" stroke-width="1.3"/></svg>
<div class="t" style="top:382.70px;font-size:9.1px;line-height:9.1px;color:#c9262e;left:343.30px;transform-origin:0 0;transform:scaleX(1.0000);z-index:5;">24/09/2020</div>
<div class="t" style="top:382.70px;font-size:9.1px;line-height:9.1px;color:#c9262e;left:451.00px;transform-origin:0 0;transform:scaleX(1.0000);z-index:5;">Despesas pessoais:Higiene pessoal</div>
<div class="t" style="top:382.70px;font-size:9.1px;line-height:9.1px;color:#c9262e;right:108.70px;transform-origin:100% 0;transform:scaleX(0.9300);z-index:5;">(4,90)</div>
<div class="t" style="top:382.70px;font-size:9.1px;line-height:9.1px;color:#282828;right:33.10px;transform-origin:100% 0;transform:scaleX(0.9500);z-index:5;">1.216,59</div>
<div class="t" style="top:382.70px;font-size:9.1px;line-height:9.1px;color:#c9262e;left:999.20px;transform-origin:0 0;transform:scaleX(1.0000);z-index:5;">C</div>
<div style="left:257px;top:394.3px;width:755.4px;height:16.0px;background:#f0f7fd;"></div>
<svg style="left:260.4px;top:396.80px;z-index:3" width="11" height="11" viewBox="0 0 11 11"><circle cx="5.5" cy="5.5" r="4.4" fill="none" stroke="#f04a4a" stroke-width="1.1"/><path d="M3.5 5.5h4" stroke="#f04a4a" stroke-width="1.3"/></svg>
<div class="t" style="top:398.70px;font-size:9.1px;line-height:9.1px;color:#c9262e;left:343.30px;transform-origin:0 0;transform:scaleX(1.0000);z-index:5;">29/09/2020</div>
<div class="t" style="top:398.70px;font-size:9.1px;line-height:9.1px;color:#c9262e;right:108.70px;transform-origin:100% 0;transform:scaleX(0.9300);z-index:5;">(163,70)</div>
<div class="t" style="top:398.70px;font-size:9.1px;line-height:9.1px;color:#282828;right:33.10px;transform-origin:100% 0;transform:scaleX(0.9500);z-index:5;">1.052,89</div>
<div class="t" style="top:398.70px;font-size:9.1px;line-height:9.1px;color:#c9262e;left:999.20px;transform-origin:0 0;transform:scaleX(1.0000);z-index:5;">C</div>
<svg style="left:260.4px;top:412.80px;z-index:3" width="11" height="11" viewBox="0 0 11 11"><circle cx="5.5" cy="5.5" r="4.4" fill="none" stroke="#f04a4a" stroke-width="1.1"/><path d="M3.5 5.5h4" stroke="#f04a4a" stroke-width="1.3"/></svg>
<div class="t" style="top:414.70px;font-size:9.1px;line-height:9.1px;color:#c9262e;left:343.30px;transform-origin:0 0;transform:scaleX(1.0000);z-index:5;">30/09/2020</div>
<div class="t" style="top:414.70px;font-size:9.1px;line-height:9.1px;color:#c9262e;right:108.70px;transform-origin:100% 0;transform:scaleX(0.9300);z-index:5;">(52,00)</div>
<div class="t" style="top:414.70px;font-size:9.1px;line-height:9.1px;color:#282828;right:33.10px;transform-origin:100% 0;transform:scaleX(0.9500);z-index:5;">1.000,89</div>
<div class="t" style="top:414.70px;font-size:9.1px;line-height:9.1px;color:#c9262e;left:999.20px;transform-origin:0 0;transform:scaleX(1.0000);z-index:5;">C</div>
<div style="left:257px;top:426.3px;width:755.4px;height:16.2px;background:#f0f7fd;"></div>
<svg style="left:260.4px;top:428.90px;z-index:3" width="11" height="11" viewBox="0 0 11 11"><circle cx="5.5" cy="5.5" r="4.4" fill="none" stroke="#f04a4a" stroke-width="1.1"/><path d="M3.5 5.5h4" stroke="#f04a4a" stroke-width="1.3"/></svg>
<div class="t" style="top:430.80px;font-size:9.1px;line-height:9.1px;color:#c9262e;left:343.30px;transform-origin:0 0;transform:scaleX(1.0000);z-index:5;">30/09/2020</div>
<div class="t" style="top:430.80px;font-size:9.1px;line-height:9.1px;color:#c9262e;left:451.00px;transform-origin:0 0;transform:scaleX(1.0000);z-index:5;">Alimentação</div>
<div class="t" style="top:430.80px;font-size:9.1px;line-height:9.1px;color:#c9262e;left:629.00px;transform-origin:0 0;transform:scaleX(1.0000);z-index:5;">Restaurante</div>
<div class="t" style="top:430.80px;font-size:9.1px;line-height:9.1px;color:#c9262e;right:108.70px;transform-origin:100% 0;transform:scaleX(0.9300);z-index:5;">(27,99)</div>
<div class="t" style="top:430.80px;font-size:9.1px;line-height:9.1px;color:#282828;right:33.10px;transform-origin:100% 0;transform:scaleX(0.9500);z-index:5;">972,90</div>
<div class="t" style="top:430.80px;font-size:9.1px;line-height:9.1px;color:#c9262e;left:999.20px;transform-origin:0 0;transform:scaleX(1.0000);z-index:5;">C</div>
<div class="t" style="top:453.67px;font-size:10.2px;line-height:10.2px;color:#6f6f6f;left:258.90px;transform-origin:0 0;transform:scaleX(1.0011);z-index:5;-webkit-text-stroke:0.15px #6f6f6f;">outubro</div>
<div style="left:257px;top:466px;width:755.4px;height:16.6px;background:#f0f7fd;"></div>
<svg style="left:260.4px;top:468.80px;z-index:3" width="11" height="11" viewBox="0 0 11 11"><circle cx="5.5" cy="5.5" r="4.4" fill="none" stroke="#f04a4a" stroke-width="1.1"/><path d="M3.5 5.5h4" stroke="#f04a4a" stroke-width="1.3"/></svg>
<div class="t" style="top:470.70px;font-size:9.1px;line-height:9.1px;color:#c9262e;left:343.30px;transform-origin:0 0;transform:scaleX(1.0000);z-index:5;">05/10/2020</div>
<div class="t" style="top:470.70px;font-size:9.1px;line-height:9.1px;color:#c9262e;left:451.00px;transform-origin:0 0;transform:scaleX(1.0000);z-index:5;">Alimentação</div>
<div class="t" style="top:470.70px;font-size:9.1px;line-height:9.1px;color:#c9262e;left:629.00px;transform-origin:0 0;transform:scaleX(1.0000);z-index:5;">Restaurante</div>
<div class="t" style="top:470.70px;font-size:9.1px;line-height:9.1px;color:#c9262e;right:108.70px;transform-origin:100% 0;transform:scaleX(0.9300);z-index:5;">(32,30)</div>
<div class="t" style="top:470.70px;font-size:9.1px;line-height:9.1px;color:#282828;right:33.10px;transform-origin:100% 0;transform:scaleX(0.9500);z-index:5;">940,60</div>
<div class="t" style="top:470.70px;font-size:9.1px;line-height:9.1px;color:#c9262e;left:999.20px;transform-origin:0 0;transform:scaleX(1.0000);z-index:5;">C</div>
<svg style="left:260.4px;top:485.00px;z-index:3" width="11" height="11" viewBox="0 0 11 11"><circle cx="5.5" cy="5.5" r="4.4" fill="none" stroke="#3a87f2" stroke-width="1.1"/><path d="M5.5 3.3v4.4M3.3 5.5h4.4" stroke="#3a87f2" stroke-width="1.2"/></svg>
<div class="t" style="top:486.90px;font-size:9.1px;line-height:9.1px;color:#282828;left:343.30px;transform-origin:0 0;transform:scaleX(1.0000);z-index:5;">06/10/2020</div>
<div class="t" style="top:486.90px;font-size:9.1px;line-height:9.1px;color:#282828;left:451.00px;transform-origin:0 0;transform:scaleX(1.0000);z-index:5;">Fontes de renda:Mesada</div>
<div class="t" style="top:486.90px;font-size:9.1px;line-height:9.1px;color:#282828;right:184.00px;transform-origin:100% 0;transform:scaleX(0.9500);z-index:5;">400,00</div>
<div class="t" style="top:486.90px;font-size:9.1px;line-height:9.1px;color:#282828;right:33.10px;transform-origin:100% 0;transform:scaleX(0.9500);z-index:5;">1.340,60</div>
<div class="t" style="top:486.90px;font-size:9.1px;line-height:9.1px;color:#282828;left:999.20px;transform-origin:0 0;transform:scaleX(1.0000);z-index:5;">C</div>
<div style="left:257px;top:498.4px;width:755.4px;height:4.6px;background:#f0f7fd;"></div>
<svg style="left:260.5px;top:500px;z-index:3" width="11" height="3" viewBox="0 0 11 3"><path d="M2.2 2.5a4.7 4.7 0 0 1 6.6 0" fill="none" stroke="#3a87f2" stroke-width="1.1"/></svg>
<div style="left:1012.3px;top:147px;width:0.8px;height:356px;background:#f0f0f0;"></div>
<div class="t" style="top:191.73px;font-size:14.5px;line-height:14.5px;color:#ff0000;font-weight:bold;left:727.40px;transform-origin:0 0;z-index:5;">2</div>
<div style="left:261px;top:505px;width:751px;height:1px;background:#e4e4e4;"></div>
<div class="t" style="top:517.57px;font-size:11.5px;line-height:11.5px;color:#2e9ad2;left:261.00px;transform-origin:0 0;transform:scaleX(0.8355);z-index:5;">3.045,59</div>
<div class="t" style="top:530.98px;font-size:8.3px;line-height:8.3px;color:#6a6a6a;left:261.00px;transform-origin:0 0;transform:scaleX(0.9140);z-index:5;">total créditos</div>
<div class="t" style="top:517.57px;font-size:11.5px;line-height:11.5px;color:#c0392b;left:394.00px;transform-origin:0 0;transform:scaleX(0.8372);z-index:5;">(1.330,68)</div>
<div class="t" style="top:530.98px;font-size:8.3px;line-height:8.3px;color:#6a6a6a;left:394.00px;transform-origin:0 0;transform:scaleX(0.8849);z-index:5;">total débitos</div>
<div style="left:890.9px;top:508px;width:119.8px;height:32px;background:#c3e8fc;"></div>
<div class="t" style="top:512.75px;font-size:12px;line-height:12px;color:#2b8fd2;right:16.00px;transform-origin:100% 0;transform:scaleX(0.9033);z-index:5;">1.714,91</div>
<div class="t" style="top:530.20px;font-size:7.8px;line-height:7.8px;color:#6a6a6a;right:16.00px;transform-origin:100% 0;transform:scaleX(1.0300);z-index:5;">saldo</div>
<div style="left:256px;top:542.6px;width:762px;height:32.6px;background:#f3f3f3;"></div>
<div class="t" style="top:548.89px;font-size:11px;line-height:11px;color:#7a7a7a;left:262.00px;transform-origin:0 0;transform:scaleX(0.8980);z-index:5;">18</div>
<div class="t" style="top:562.57px;font-size:7.6px;line-height:7.6px;color:#6a6a6a;left:262.00px;transform-origin:0 0;transform:scaleX(0.9659);z-index:5;">itens</div>
<div class="t" style="top:534.73px;font-size:14.5px;line-height:14.5px;color:#ff0000;font-weight:bold;left:542.40px;transform-origin:0 0;z-index:5;">8</div>
<div class="t" style="top:548.69px;font-size:11px;line-height:11px;color:#333333;right:145.40px;transform-origin:100% 0;transform:scaleX(0.8776);z-index:5;">0,00</div>
<div class="t" style="top:562.57px;font-size:7.6px;line-height:7.6px;color:#6a6a6a;right:145.40px;transform-origin:100% 0;transform:scaleX(0.8909);z-index:5;">limite</div>
<div style="left:886.4px;top:547px;width:123.4px;height:14.5px;background:#ffffff;"></div>
<div class="t" style="top:548.59px;font-size:11px;line-height:11px;color:#2b8fd2;right:15.00px;transform-origin:100% 0;transform:scaleX(0.8406);z-index:5;">1.714,91</div>
<div class="t" style="top:562.77px;font-size:7.6px;line-height:7.6px;color:#6a6a6a;right:14.00px;transform-origin:100% 0;transform:scaleX(0.9765);z-index:5;">disponível</div>
</body></html>
